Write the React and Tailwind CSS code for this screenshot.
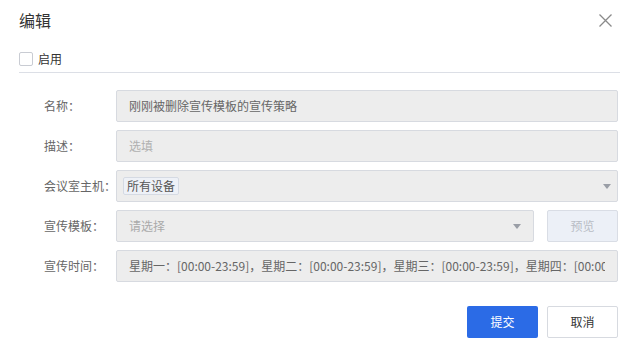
const font = { fontFamily: '"Noto Sans CJK SC", "Noto Sans", sans-serif' }

function Row({ label, children }) {
  return (
    <div className="flex items-center h-8">
      <div className="w-[72px] text-xs text-[#666]">{label}</div>
      <div className="flex-1 flex items-center gap-[13px] h-full min-w-0">{children}</div>
    </div>
  )
}

function Field({ children, arrow, className = '' }) {
  return (
    <div className={`flex-1 h-full flex items-center px-3 bg-[#ededed] border border-[#d7dae0] rounded-[2px] text-xs overflow-hidden whitespace-nowrap min-w-0 ${className}`}>
      <div className="flex-1 min-w-0 overflow-hidden">{children}</div>
      {arrow && (
        <svg width="8" height="5" viewBox="0 0 8 5" className="ml-2 shrink-0">
          <path d="M0 0 H8 L4 5 Z" fill="#9a9ea6" />
        </svg>
      )}
    </div>
  )
}

export default function App() {
  return (
    <div className="w-[639px] h-[352px] bg-white" style={font}>
      {/* Header */}
      <div className="flex items-center justify-between pl-[19px] pr-[27px] h-[40px]">
        <h1 className="text-base text-[#333]">编辑</h1>
        <svg width="13" height="13" viewBox="0 0 13 13">
          <path d="M0.5 0.5 L12.5 12.5 M12.5 0.5 L0.5 12.5" stroke="#8a8a8a" strokeWidth="1.3" />
        </svg>
      </div>

      {/* Enable */}
      <div className="mx-[19px] mt-[12px] flex items-center gap-[5px] pb-[6px] border-b border-[#dcdfe6]">
        <div className="w-[14px] h-[14px] border border-[#c9ccd3] rounded-[2px] bg-white" />
        <span className="text-xs leading-[14px] text-[#333]">启用</span>
      </div>

      {/* Form */}
      <div className="pl-[44px] pr-[21px] pt-[17px] flex flex-col gap-2">
        <Row label="名称：">
          <Field><span className="text-[#666]">刚刚被删除宣传模板的宣传策略</span></Field>
        </Row>
        <Row label="描述：">
          <Field><span className="text-[#b0b0b0]">选填</span></Field>
        </Row>
        <Row label="会议室主机：">
          <Field arrow className="!px-[6px]">
            <span className="inline-flex items-center h-[18px] px-[3px] bg-[#eef1f7] border border-[#d5dae3] rounded-[2px] text-[#555]">所有设备</span>
          </Field>
        </Row>
        <Row label="宣传模板：">
          <Field arrow><span className="text-[#aaa]">请选择</span></Field>
          <div className="w-[71px] h-full shrink-0 flex items-center justify-center bg-[#ecf0f7] border border-[#d9dde5] rounded-[2px] text-xs text-[#b9bdc5]">
            预览
          </div>
        </Row>
        <Row label="宣传时间：">
          <Field>
            <span className="text-[#666]">星期一：[00:00-23:59]，星期二：[00:00-23:59]，星期三：[00:00-23:59]，星期四：[00:00-23:59]</span>
          </Field>
        </Row>
      </div>

      {/* Footer */}
      <div className="flex justify-end gap-[9px] pr-[21px] mt-[24px]">
        <button className="w-[71px] h-8 bg-[#2b6be6] rounded-[2px] text-xs text-white">提交</button>
        <button className="w-[71px] h-8 bg-white border border-[#d7dae0] rounded-[2px] text-xs text-[#333]">取消</button>
      </div>
    </div>
  )
}
